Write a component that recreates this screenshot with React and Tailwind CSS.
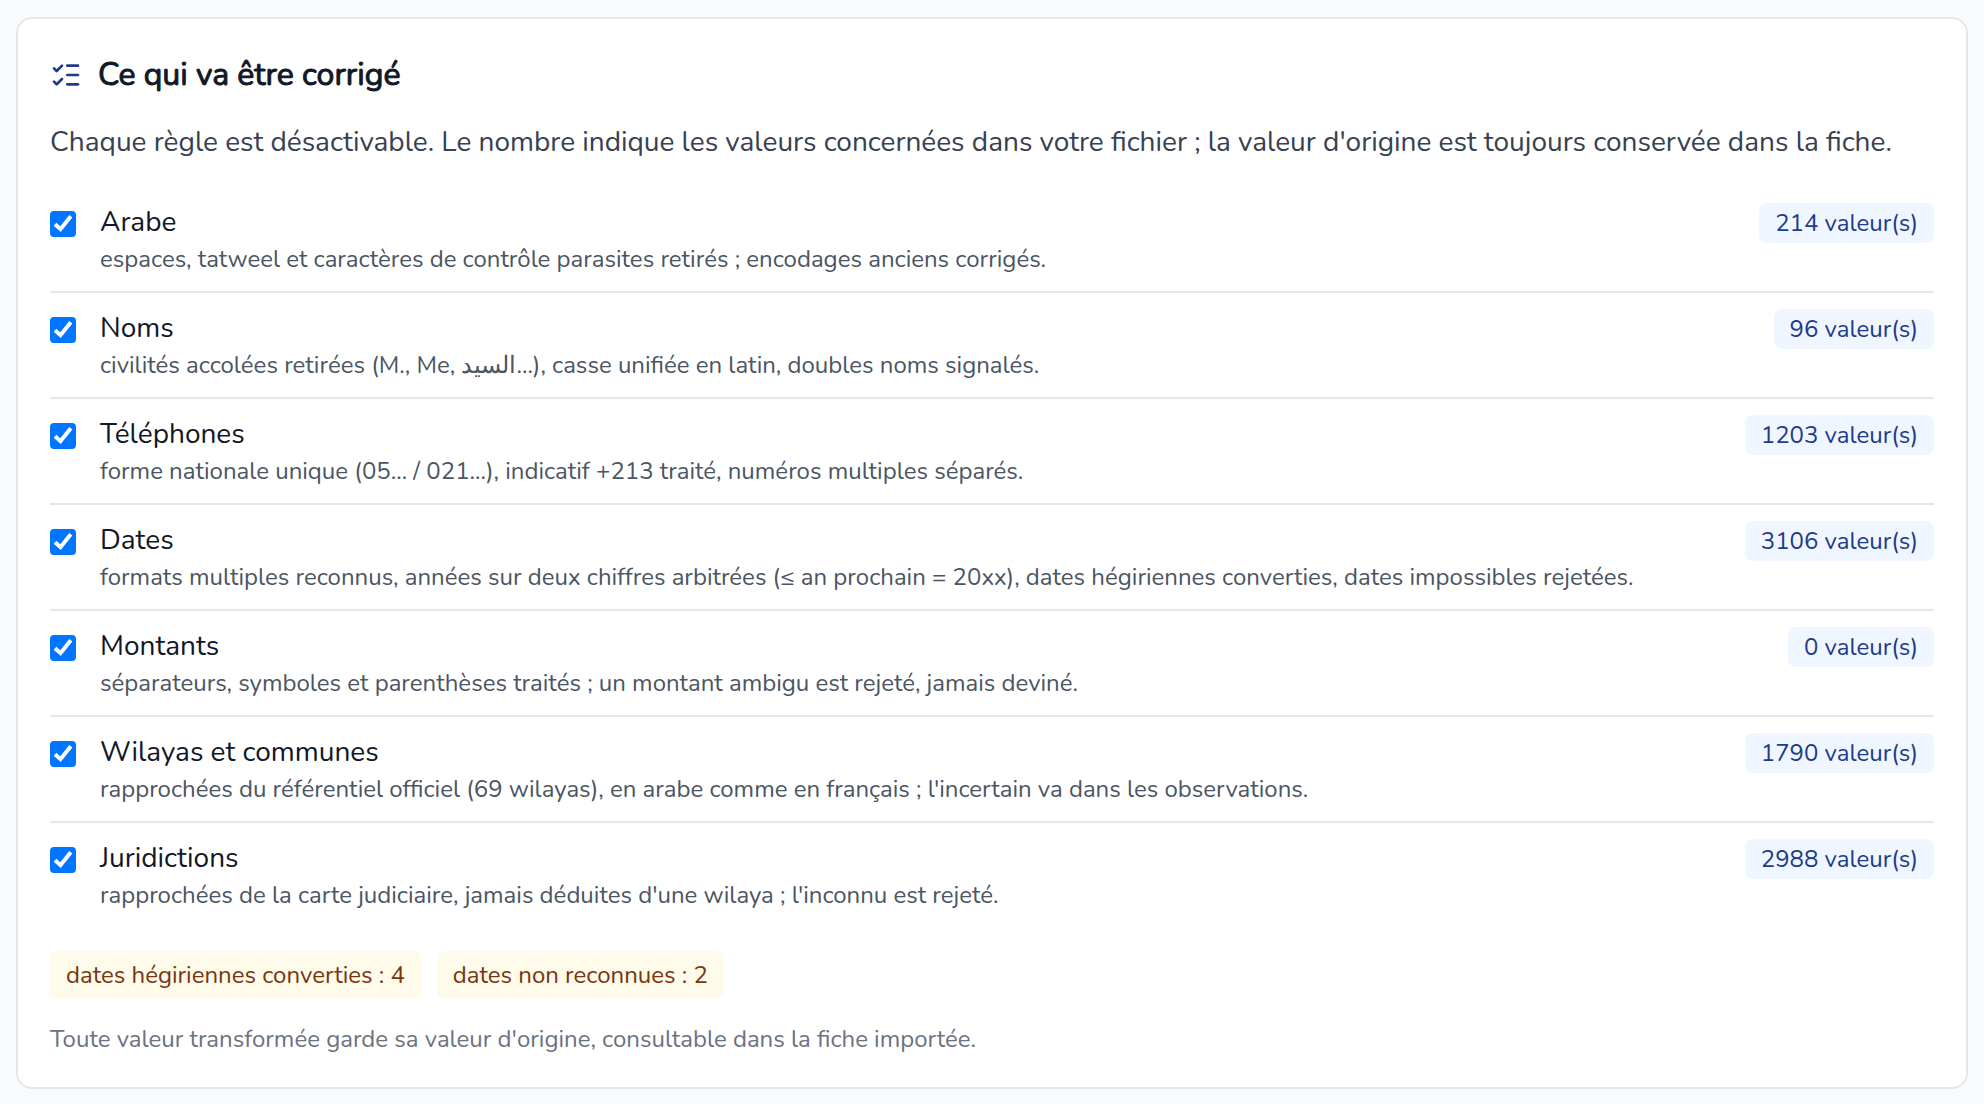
import { ListChecks } from "lucide-react";

const rules = [
  { id: "arabe", label: "Arabe", count: 214, detail: "espaces, tatweel et caractères de contrôle parasites retirés ; encodages anciens corrigés." },
  { id: "noms", label: "Noms", count: 96, detail: "civilités accolées retirées (M., Me, السيد…), casse unifiée en latin, doubles noms signalés." },
  { id: "telephones", label: "Téléphones", count: 1203, detail: "forme nationale unique (05… / 021…), indicatif +213 traité, numéros multiples séparés." },
  { id: "dates", label: "Dates", count: 3106, detail: "formats multiples reconnus, années sur deux chiffres arbitrées (≤ an prochain = 20xx), dates hégiriennes converties, dates impossibles rejetées." },
  { id: "montants", label: "Montants", count: 0, detail: "séparateurs, symboles et parenthèses traités ; un montant ambigu est rejeté, jamais deviné." },
  { id: "wilayas", label: "Wilayas et communes", count: 1790, detail: "rapprochées du référentiel officiel (69 wilayas), en arabe comme en français ; l'incertain va dans les observations." },
  { id: "juridictions", label: "Juridictions", count: 2988, detail: "rapprochées de la carte judiciaire, jamais déduites d'une wilaya ; l'inconnu est rejeté." },
];

const notes = ["dates hégiriennes converties : 4", "dates non reconnues : 2"];

function Rule({ id, label, count, detail }) {
  return (
    <li className="flex items-start gap-6 py-4">
      <span className="mt-2 grid size-[26px] shrink-0">
        <input
          id={id}
          type="checkbox"
          defaultChecked
          aria-describedby={`${id}-detail`}
          className="peer col-start-1 row-start-1 size-full appearance-none rounded border-2 border-gray-500 bg-white checked:border-[#0075ff] checked:bg-[#0075ff]"
        />
        <svg
          viewBox="0 0 26 26"
          fill="none"
          aria-hidden="true"
          className="pointer-events-none invisible col-start-1 row-start-1 size-full stroke-white peer-checked:visible"
        >
          <path d="M5 13.2 10.5 18.2 20.8 5.2" strokeWidth="4" />
        </svg>
      </span>
      <div className="min-w-0 flex-1">
        <label htmlFor={id} className="block text-[28px] leading-[38px] text-[#111827]">
          {label}
        </label>
        <p id={`${id}-detail`} className="mt-0.5 text-2xl leading-8 text-[#4b5563]">
          {detail}
        </p>
      </div>
      <span className="shrink-0 rounded-lg bg-blue-50 px-4 py-1 text-2xl leading-8 text-[#1e3a8a]">
        {count} valeur(s)
      </span>
    </li>
  );
}

export default function App() {
  return (
    <main className="min-h-screen bg-[#f9fafc] px-4 pt-[17px] pb-4 font-['Nunito','Noto_Sans',sans-serif]">
      <section className="rounded-2xl border-2 border-gray-200 bg-white p-8">
        <h2 className="flex items-center gap-4 text-[32px] leading-[48px] font-normal text-[#111827]">
          <ListChecks className="size-8 text-[#1e3a8a]" aria-hidden="true" />
          <span className="[-webkit-text-stroke:1px_currentColor]">Ce qui va être corrigé</span>
        </h2>
        <p className="mt-6 text-[28px] leading-[38px] text-[#374151]">
          Chaque règle est désactivable. Le nombre indique les valeurs concernées dans votre fichier ; la valeur
          d'origine est toujours conservée dans la fiche.
        </p>
        <ul className="mt-[26px] divide-y-2 divide-gray-200">
          {rules.map((rule) => (
            <Rule key={rule.id} {...rule} />
          ))}
        </ul>
        <div className="mt-6 flex flex-wrap gap-4">
          {notes.map((note) => (
            <span key={note} className="rounded-lg bg-amber-50 px-4 py-2 text-2xl leading-8 text-[#78350f]">
              {note}
            </span>
          ))}
        </div>
        <p className="mt-6 text-2xl leading-8 text-[#6b7280]">
          Toute valeur transformée garde sa valeur d'origine, consultable dans la fiche importée.
        </p>
      </section>
    </main>
  );
}
